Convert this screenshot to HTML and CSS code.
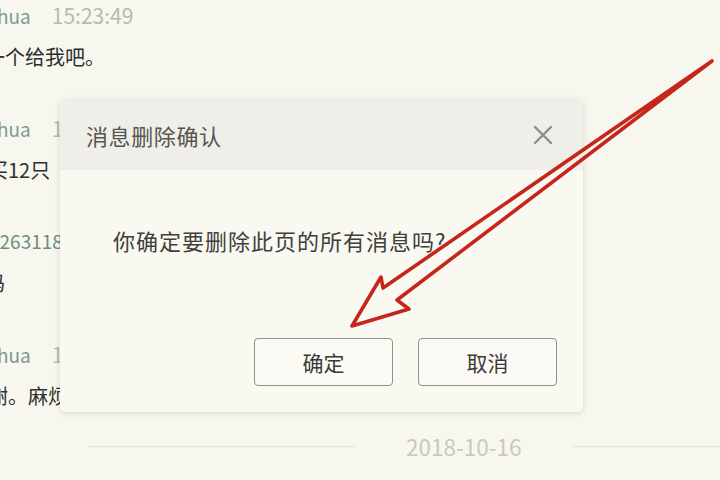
FILE: index.html
```html
<!DOCTYPE html>
<html lang="zh-CN">
<head>
<meta charset="utf-8">
<title>消息删除确认</title>
<link rel="stylesheet" href="styles.css">
</head>
<body>
<div class="page">
  <div class="chat">
    <div class="row">
      <div class="meta"><span class="name">hua</span><span class="time">15:23:49</span></div>
      <div class="msg m1">一个给我吧。</div>
    </div>
    <div class="row">
      <div class="meta"><span class="name">hua</span><span class="time">15:24:10</span></div>
      <div class="msg m2">买12只</div>
    </div>
    <div class="row">
      <div class="meta"><span class="num">126311849</span></div>
      <div class="msg m3">吗</div>
    </div>
    <div class="row">
      <div class="meta"><span class="name">hua</span><span class="time">15:30:02</span></div>
      <div class="msg m4">谢。麻烦</div>
    </div>
    <div class="divider">
      <span class="line"></span>
      <span class="date">2018-10-16</span>
      <span class="line"></span>
    </div>
  </div>

  <div class="dialog">
    <div class="dialog-head">
      <span class="dialog-title">消息删除确认</span>
      <svg class="close" width="20" height="20" viewBox="0 0 20 20">
        <path d="M2 2 L18 18 M18 2 L2 18" stroke="#8e8e89" stroke-width="2.4" stroke-linecap="round" fill="none"/>
      </svg>
    </div>
    <div class="dialog-body">
      <p class="question">你确定要删除此页的所有消息吗?</p>
      <div class="actions">
        <button class="btn">确定</button>
        <button class="btn">取消</button>
      </div>
    </div>
  </div>

  <svg class="arrow" width="720" height="480" viewBox="0 0 720 480">
    <polygon points="712,61 383,288 381,277 352,326 409,309 397,300" fill="none" stroke="#c5261c" stroke-width="3.6" stroke-linejoin="round"/>
  </svg>
</div>
</body>
</html>
```

FILE: styles.css
```css
html, body {
  margin: 0;
  padding: 0;
}
body {
  background: #f8f7ef;
  font-family: "Noto Sans CJK SC", "Noto Sans", sans-serif;
  overflow: hidden;
}
.page {
  position: relative;
  width: 720px;
  height: 480px;
  overflow: hidden;
  background: #f8f7ef;
}
.chat {
  display: flex;
  flex-direction: column;
  gap: 41px;
}
.row {
  display: flex;
  flex-direction: column;
  gap: 12px;
}
.meta {
  height: 30px;
  line-height: 30px;
  font-size: 19px;
  display: flex;
  align-items: baseline;
  gap: 21px;
  margin-left: -3px;
}
.name {
  color: #7d9a8e;
}
.time {
  color: #b9b8b1;
  font-size: 21px;
}
.num {
  color: #6f8c80;
  margin-left: -8px;
}
.msg {
  height: 30px;
  line-height: 30px;
  font-size: 20px;
  color: #2e2e2c;
  white-space: nowrap;
}
.m1 { margin-left: -15px; }
.m2 { margin-left: -12px; }
.m3 { margin-left: -15px; }
.m4 { margin-left: -12px; }

.divider {
  margin-top: -21px;
  display: flex;
  align-items: center;
  gap: 51px;
  padding-left: 88px;
  height: 30px;
}
.line {
  width: 267px;
  height: 1px;
  background: #e3e2da;
  flex: none;
}
.date {
  font-size: 22.5px;
  color: #c9c8c2;
  flex: none;
}

.dialog {
  position: absolute;
  left: 60px;
  top: 100px;
  width: 523px;
  height: 312px;
  background: #f9f8f1;
  border-radius: 5px;
  box-shadow: 0 1px 6px rgba(0, 0, 0, 0.13);
  display: flex;
  flex-direction: column;
  overflow: hidden;
}
.dialog-head {
  height: 70px;
  background: #efeee8;
  display: flex;
  align-items: center;
  justify-content: space-between;
  padding: 0 30px 0 26px;
  flex: none;
}
.dialog-title {
  font-size: 22px;
  color: #555552;
  letter-spacing: 0.6px;
}
.close {
  display: block;
}
.dialog-body {
  flex: 1;
  display: flex;
  flex-direction: column;
  padding: 55px 26px 26px 53px;
}
.question {
  margin: 0;
  font-size: 22px;
  line-height: 30px;
  color: #3f3f3c;
  letter-spacing: 1px;
}
.actions {
  margin-top: auto;
  display: flex;
  justify-content: flex-end;
  gap: 25px;
}
.btn {
  width: 139px;
  height: 48px;
  border: 1.5px solid #908f89;
  border-radius: 4px;
  background: #fbfaf4;
  font-family: "Noto Sans CJK SC", "Noto Sans", sans-serif;
  font-size: 21px;
  color: #3a3a37;
  padding: 0;
}

.arrow {
  position: absolute;
  left: 0;
  top: 0;
  pointer-events: none;
}
```
